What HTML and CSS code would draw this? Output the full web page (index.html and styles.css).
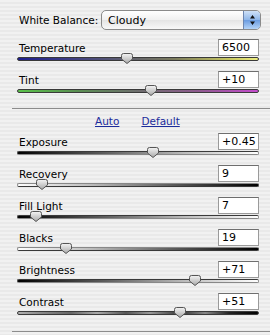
FILE: index.html
```html
<!DOCTYPE html>
<html lang="en">
<head>
    <meta charset="UTF-8">
    <title>Basic</title>
    <link rel="stylesheet" href="styles.css">
</head>
<body>
    <div class="panel">
        <div class="wb-row">
            <span class="label">White Balance:</span>
            <div class="popup">
                <span>Cloudy</span>
                <span class="stepper">
                    <svg width="7" height="12" viewBox="0 0 7 12"><path d="M3.5 1 L6 4.5 L1 4.5 Z M3.5 11 L6 7.5 L1 7.5 Z" fill="#111"/></svg>
                </span>
            </div>
        </div>

        <div class="section">
            <div class="row">
                <div class="head"><span class="label">Temperature</span><input class="value" value="6500"></div>
                <div class="track temp"><span class="thumb" style="left: 45.5%"></span></div>
            </div>
            <div class="row">
                <div class="head"><span class="label">Tint</span><input class="value" value="+10"></div>
                <div class="track tint"><span class="thumb" style="left: 55.4%"></span></div>
            </div>
        </div>

        <div class="divider"></div>

        <div class="links">
            <a href="#">Auto</a>
            <a href="#">Default</a>
        </div>

        <div class="section">
            <div class="row">
                <div class="head"><span class="label">Exposure</span><input class="value" value="+0.45"></div>
                <div class="track dark-light"><span class="thumb" style="left: 56.2%"></span></div>
            </div>
            <div class="row">
                <div class="head"><span class="label">Recovery</span><input class="value" value="9"></div>
                <div class="track light-dark"><span class="thumb" style="left: 9.9%"></span></div>
            </div>
            <div class="row">
                <div class="head"><span class="label">Fill Light</span><input class="value" value="7"></div>
                <div class="track dark-light"><span class="thumb" style="left: 7.4%"></span></div>
            </div>
            <div class="row">
                <div class="head"><span class="label">Blacks</span><input class="value" value="19"></div>
                <div class="track light-dark"><span class="thumb" style="left: 19.8%"></span></div>
            </div>
            <div class="row">
                <div class="head"><span class="label">Brightness</span><input class="value" value="+71"></div>
                <div class="track dark-light"><span class="thumb" style="left: 73.6%"></span></div>
            </div>
            <div class="row">
                <div class="head"><span class="label">Contrast</span><input class="value" value="+51"></div>
                <div class="track contrast"><span class="thumb" style="left: 67.4%"></span></div>
            </div>
        </div>

        <div class="divider bottom"></div>
    </div>
</body>
</html>
```

FILE: styles.css
```css
body {
    margin: 0;
    font-family: "DejaVu Sans", sans-serif;
    font-size: 10.5px;
    color: #000;
    background: repeating-linear-gradient(#f1f1f1 0 2px, #e9e9e9 2px 4px);
    height: 335px;
    overflow: hidden;
}

.panel {
    padding: 10px 0 0 12px;
}

/* ligne de la balance des blancs */
.wb-row {
    display: flex;
    align-items: center;
    height: 20px;
    padding-left: 7px;
    margin-bottom: 9px;
}
.wb-row .label {
    width: 82px;
}
.popup {
    display: flex;
    align-items: center;
    justify-content: space-between;
    width: 152px;
    height: 18px;
    border: 1px solid #8a8a8a;
    border-radius: 5px;
    background: linear-gradient(#ffffff, #f0f0f0 50%, #e4e4e4 51%, #f8f8f8);
    padding-left: 6px;
    box-sizing: content-box;
    overflow: hidden;
    font-size: 11px;
}
.stepper {
    display: flex;
    align-items: center;
    justify-content: center;
    width: 16px;
    height: 18px;
    border-left: 1px solid #6d86b0;
    background: linear-gradient(#cfe1f7, #8db5e8 50%, #6a9be0 51%, #b4d4f8);
}

/* lignes de curseurs */
.section {
    padding: 0 11px 0 5px;
}
.row {
    height: 32px;
}
.head {
    display: flex;
    align-items: center;
    justify-content: space-between;
    height: 17px;
    padding-left: 2px;
}
.value {
    width: 36px;
    height: 15px;
    border: 1px solid #9a9a9a;
    border-top-color: #6e6e6e;
    background: #fff;
    padding: 0 0 0 3px;
    margin: 0;
    font-family: "DejaVu Sans", sans-serif;
    font-size: 11px;
    color: #000;
    box-sizing: content-box;
}
.track {
    position: relative;
    height: 2px;
    margin-top: 1px;
    border: 1px solid #3a3a3a;
    border-radius: 3px;
}
.thumb {
    position: absolute;
    top: -5px;
    width: 12px;
    height: 11px;
    margin-left: -6px;
    background: url("data:image/svg+xml,%3Csvg xmlns='http://www.w3.org/2000/svg' width='12' height='11'%3E%3Cdefs%3E%3ClinearGradient id='g' x1='0' y1='0' x2='0' y2='1'%3E%3Cstop offset='0' stop-color='%23f4f4f4'/%3E%3Cstop offset='1' stop-color='%23a8a8a8'/%3E%3C/linearGradient%3E%3C/defs%3E%3Cpath d='M2.5 0.5 H9.5 Q11.5 0.5 11.5 2.5 V6 L6 10.5 L0.5 6 V2.5 Q0.5 0.5 2.5 0.5 Z' fill='url(%23g)' stroke='%23555'/%3E%3C/svg%3E") no-repeat;
}

.temp {
    background: linear-gradient(to right, #1e1e8e, #3c3c86 20%, #5e5e6e 45%, #7a7a5c 65%, #c8c860 88%, #eeee80);
}
.tint {
    background: linear-gradient(to right, #5ac24a, #5a8e52 25%, #6e6e6e 50%, #8e5a8e 75%, #c44ccc);
}
.dark-light {
    background: linear-gradient(to right, #000, #5a5a5a 35%, #bdbdbd 70%, #fff);
    border-color: #3a3a3a #888 #888 #3a3a3a;
}
.light-dark {
    background: linear-gradient(to right, #fff, #bdbdbd 30%, #5a5a5a 65%, #000);
    border-color: #888 #3a3a3a #3a3a3a #888;
}
.contrast {
    background: linear-gradient(to right, #b0b0b0, #888 10%, #666 22%, #aaa 33%, #555 45%, #999 55%, #333 68%, #888 78%, #222 88%, #000);
}

.divider {
    height: 1px;
    margin-top: 5px;
    background: #8c8c8c;
}
.divider.bottom {
    margin-top: 6px;
}

.links {
    display: flex;
    gap: 22px;
    height: 24px;
    align-items: center;
    padding-left: 83px;
}
.links a {
    color: #1c2c9c;
    text-decoration: underline;
}
```
